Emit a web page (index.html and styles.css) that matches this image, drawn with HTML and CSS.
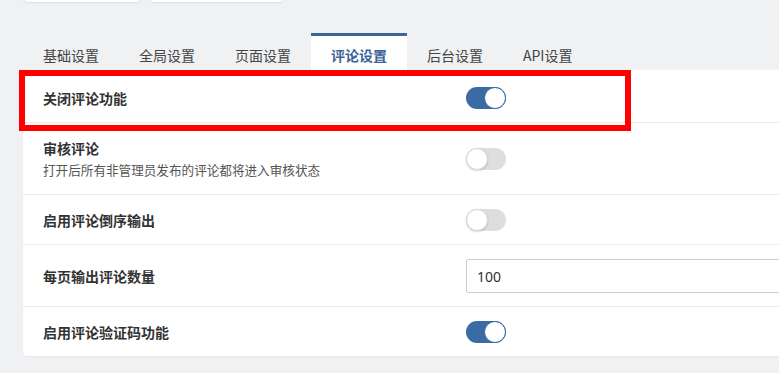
FILE: index.html
```html
<html lang="zh-CN">
<head>
  <meta charset="UTF-8">
  <meta name="viewport" content="width=device-width, initial-scale=1.0">
  <title>评论设置</title>
  <link rel="stylesheet" href="styles.css">
</head>
<body>
  <div class="page">
    <!-- buttons cut off at the top -->
    <div class="top-btns">
      <div class="btn btn-a"></div>
      <div class="btn btn-b"></div>
    </div>

    <!-- Tabs -->
    <ul class="tabs">
      <li class="tab">基础设置</li>
      <li class="tab">全局设置</li>
      <li class="tab">页面设置</li>
      <li class="tab active">评论设置</li>
      <li class="tab">后台设置</li>
      <li class="tab">API设置</li>
    </ul>

    <!-- Comment settings -->
    <div class="card">
      <div class="row">
        <div class="label">关闭评论功能</div>
        <div class="field"><span class="switch on"></span></div>
      </div>
      <div class="row">
        <div class="label">
          审核评论
          <p class="desc">打开后所有非管理员发布的评论都将进入审核状态</p>
        </div>
        <div class="field"><span class="switch"></span></div>
      </div>
      <div class="row">
        <div class="label">启用评论倒序输出</div>
        <div class="field"><span class="switch"></span></div>
      </div>
      <div class="row">
        <div class="label">每页输出评论数量</div>
        <div class="field"><input type="text" class="input" value="100"></div>
      </div>
      <div class="row last">
        <div class="label">启用评论验证码功能</div>
        <div class="field"><span class="switch on"></span></div>
      </div>

      <div class="highlight"></div>
    </div>
  </div>
</body>
</html>
```

FILE: styles.css
```css
/* General Styling */
body {
  margin: 0;
  padding: 0;
  background: #f0f1f3;
  font-family: "Noto Sans CJK SC", "Noto Sans", sans-serif;
  font-size: 14px;
  color: #333;
  overflow: hidden;
}

.page {
  width: 900px;
}

/* top buttons */
.top-btns {
  display: flex;
  gap: 10px;
  padding-left: 24px;
  margin-top: -30px;
}

.btn {
  height: 32px;
  background: #fff;
  border-radius: 4px;
  box-shadow: 0 1px 2px rgba(0, 0, 0, 0.08);
}

.btn-a {
  width: 116px;
}

.btn-b {
  width: 133px;
}

/* tabs */
.tabs {
  display: flex;
  list-style: none;
  margin: 31px 0 0;
  padding: 0 0 0 23px;
}

.tab {
  width: 56px;
  padding: 9px 20px 5px;
  line-height: 20px;
  border-top: 3px solid transparent;
  color: #444;
  white-space: nowrap;
}

.tab.active {
  background: #fff;
  border-top-color: #3d6597;
  color: #3a6398;
  font-weight: bold;
}

/* card */
.card {
  position: relative;
  margin-left: 23px;
  padding-top: 3px;
  background: #fff;
  border-radius: 0 0 4px 4px;
  box-shadow: 0 1px 2px rgba(0, 0, 0, 0.05);
}

.row {
  display: grid;
  grid-template-columns: 423px 1fr;
  align-items: center;
  padding: 14px 20px 13px;
  border-bottom: 1px solid #ebebeb;
}

.row.last {
  border-bottom: none;
}

.label {
  font-weight: bold;
  line-height: 22px;
  color: #333;
}

.desc {
  margin: 0;
  font-weight: normal;
  font-size: 12.6px;
  line-height: 22px;
  color: #555;
}

.field {
  display: flex;
  align-items: center;
}

/* switch */
.switch {
  position: relative;
  display: inline-block;
  width: 40px;
  height: 22px;
  border-radius: 11px;
  background: #dedede;
}

.switch::after {
  content: "";
  position: absolute;
  top: 0;
  left: 0;
  width: 20px;
  height: 20px;
  border: 1px solid #d8d8d8;
  border-radius: 50%;
  background: #fff;
  box-shadow: 0 1px 2px rgba(0, 0, 0, 0.15);
}

.switch.on {
  background: #3b6ba5;
}

.switch.on::after {
  left: 18px;
  border-color: #3b6ba5;
  box-shadow: none;
}

.input {
  box-sizing: border-box;
  width: 100%;
  height: 34px;
  padding: 0 10px;
  border: 1px solid #ccc;
  border-radius: 3px;
  font-family: "Noto Sans", sans-serif;
  font-size: 14px;
  color: #333;
}

/* red annotation box */
.highlight {
  position: absolute;
  top: 0;
  left: -4px;
  width: 600px;
  height: 49px;
  border: 6px solid #f00;
}
```
